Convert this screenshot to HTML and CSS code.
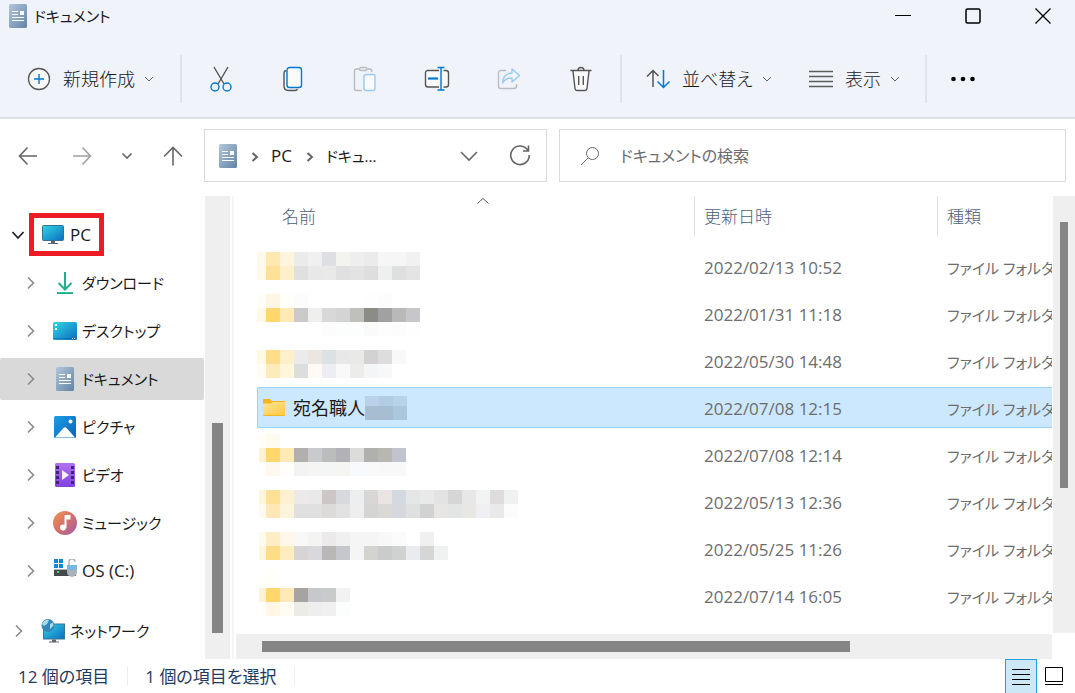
FILE: index.html
```html
<!DOCTYPE html>
<html lang="ja">
<head>
  <meta charset="UTF-8" />
  <meta name="viewport" content="width=device-width, initial-scale=1.0" />
  <title>ドキュメント</title>
  <link rel="stylesheet" href="styles.css">
</head>
<body>
  <!-- shared icons -->
  <svg class="defs" aria-hidden="true">
    <defs>
      <linearGradient id="g-doc" x1="0" y1="0" x2="1" y2="1"><stop offset="0" stop-color="#b3c6da"/><stop offset="1" stop-color="#6284a6"/></linearGradient>
      <linearGradient id="g-screen" x1="0" y1="0" x2="1" y2="1"><stop offset="0" stop-color="#33d6e4"/><stop offset="1" stop-color="#0b6cc0"/></linearGradient>
      <linearGradient id="g-pic" x1="0" y1="0" x2="1" y2="1"><stop offset="0" stop-color="#1c9de6"/><stop offset="1" stop-color="#0a63b8"/></linearGradient>
      <linearGradient id="g-video" x1="0" y1="0" x2="0" y2="1"><stop offset="0" stop-color="#b172f0"/><stop offset="1" stop-color="#8140e0"/></linearGradient>
      <linearGradient id="g-music" x1="0" y1="0" x2="1" y2="1"><stop offset="0" stop-color="#f4954f"/><stop offset=".5" stop-color="#d4706c"/><stop offset="1" stop-color="#a05cae"/></linearGradient>
      <linearGradient id="g-down" x1="0" y1="0" x2="0" y2="1"><stop offset="0" stop-color="#3cc98c"/><stop offset="1" stop-color="#0fa392"/></linearGradient>
      <linearGradient id="g-folder" x1="0" y1="0" x2="1" y2="1"><stop offset="0" stop-color="#ffe49a"/><stop offset="1" stop-color="#ffca3c"/></linearGradient>
    </defs>
    <symbol id="i-doc" viewBox="0 0 18 24">
      <rect width="18" height="24" rx="1.5" fill="url(#g-doc)"/>
      <path d="M3 7.500h6M3 10.500h6M3 13.500h12M3 16.500h12" stroke="#fff" stroke-width="1.2"/>
      <rect x="11" y="7" width="4" height="4" fill="#fff"/>
    </symbol>
    <symbol id="i-right" viewBox="0 0 10 14"><path d="M2 1.500L7.500 7L2 12.500" fill="none" stroke="currentColor" stroke-width="1.600"/></symbol>
    <symbol id="i-down" viewBox="0 0 12 8"><path d="M2 2l4 4l4-4" fill="none" stroke="currentColor"/></symbol>
  </svg>

  <header class="top">
    <div class="titlebar">
      <svg class="doc"><use href="#i-doc"/></svg>
      <h1>ドキュメント</h1>
      <div class="window-buttons">
        <button aria-label="最小化"><svg width="16" height="16"><path d="M0 7.500h16" stroke="#000"/></svg></button>
        <button aria-label="最大化"><svg width="16" height="16"><rect x="1" y="1" width="14" height="14" rx="1.500" fill="none" stroke="#000" stroke-width="1.500"/></svg></button>
        <button aria-label="閉じる"><svg width="16" height="16"><path d="M.5.5l15 15M15.500.5l-15 15" stroke="#000" stroke-width="1.300"/></svg></button>
      </div>
    </div>

    <div class="toolbar">
      <button class="command new">
        <svg width="24" height="24" fill="none"><circle cx="12" cy="12" r="10.500" fill="#fafafa" stroke="#555" stroke-width="1.300"/><path d="M12 7v10M7 12h10" stroke="#0078d4" stroke-width="1.400"/></svg>
        新規作成
        <svg class="caret"><use href="#i-down"/></svg>
      </button>
      <span class="divider"></span>
      <div class="tools">
        <button aria-label="切り取り"><svg width="24" height="26" fill="none" stroke-width="1.400"><path d="M5 1l10 17M19 1L9 18" stroke="#555"/><circle cx="6" cy="21" r="4" stroke="#0078d4"/><circle cx="18" cy="21" r="4" stroke="#0078d4"/></svg></button>
        <button aria-label="コピー"><svg width="24" height="26" fill="none" stroke-width="1.400"><path d="M5 4.500Q3 5 3 7V20Q3 24.500 7.500 24.500H14Q16 24.500 16.500 23" stroke="#555"/><rect x="6" y="1.500" width="14.500" height="20" rx="2.500" fill="#fafafa" stroke="#0078d4"/></svg></button>
        <button aria-label="貼り付け" disabled><svg width="24" height="26" fill="none" stroke-width="1.400"><path d="M6.500 3H3.500Q1.500 3 1.500 5V22.500Q1.500 24.500 3.500 24.500H9M14 3h3.500Q19 3.500 19 6" stroke="#b9bcc0"/><rect x="6.500" y="1.500" width="7.500" height="3" rx="1.500" stroke="#b9bcc0"/><rect x="11" y="8.500" width="11" height="16" rx="2" fill="#f8fafd" stroke="#9bcaf0"/></svg></button>
        <button aria-label="名前の変更"><svg width="26" height="26" fill="none"><path d="M15 4.500H4Q1.500 4.500 1.500 7V18.500Q1.500 21 4 21H15M19.500 4.500H22Q24.500 4.500 24.500 7V18.500Q24.500 21 22 21H19.500" fill="#fafafa" stroke="#555" stroke-width="1.400"/><path d="M4 12.500h10" stroke="#0078d4" stroke-width="2.200"/><path d="M17 1.500V24M13.500 1.500h7M13.500 24h7" stroke="#0078d4" stroke-width="1.400"/></svg></button>
        <button aria-label="共有" disabled><svg width="24" height="26" fill="none" stroke-width="1.400" stroke-linejoin="round"><path d="M9 4.500H4Q1.500 4.500 1.500 7V20Q1.500 22.500 4 22.500H17Q19.500 22.500 19.500 20V18" stroke="#b9bcc0"/><path d="M15 3l7.500 6.500L15 16V12Q9 11.500 5.500 17Q6 7.500 15 7Z" stroke="#9bcaf0"/></svg></button>
        <button aria-label="削除"><svg width="24" height="26" fill="none" stroke="#555" stroke-width="1.400"><path d="M4 5l2 17.500Q6.200 24.500 8 24.500H16Q17.800 24.500 18 22.500L20 5" fill="#fafafa"/><path d="M1.500 4.500h21M9 4.500Q9 1.500 12 1.500T15 4.500M9.700 10v9M14.300 10v9"/></svg></button>
      </div>
      <span class="divider"></span>
      <button class="command sort">
        <svg width="24" height="24" fill="none" stroke-width="1.500"><path d="M7 20V3.500M1 9.500l6-6l5.500 5.500" stroke="#555"/><path d="M17.500 3v17M11.500 14.500l6 6l6-6" stroke="#0078d4"/></svg>
        並べ替え
        <svg class="caret"><use href="#i-down"/></svg>
      </button>
      <button class="command view">
        <svg width="24" height="24" stroke="#5a5f5e" stroke-width="1.300"><path d="M0 4.500h24M0 9.500h24M0 14.500h24M0 19.500h24"/></svg>
        表示
        <svg class="caret"><use href="#i-down"/></svg>
      </button>
      <span class="divider"></span>
      <button class="more" aria-label="もっと見る"><svg width="26" height="8"><circle cx="3.500" cy="4" r="2.300"/><circle cx="13" cy="4" r="2.300"/><circle cx="22.500" cy="4" r="2.300"/></svg></button>
    </div>
  </header>

  <div class="location">
    <div class="history">
      <button aria-label="戻る"><svg width="20" height="20"><path d="M19 10H1.500M9.500 1.500L1.500 10l8 8.500"/></svg></button>
      <button class="off" aria-label="進む"><svg width="20" height="20"><path d="M1 10h17.500M10.500 1.500L18.500 10l-8 8.500"/></svg></button>
      <button class="recent" aria-label="最近表示した場所"><svg width="12" height="8"><path d="M1.500 1.500L6 6l4.500-4.500"/></svg></button>
      <button class="up" aria-label="上へ"><svg width="20" height="20"><path d="M10 19.500V1.500M1 10.500l9-9l9 9"/></svg></button>
    </div>
    <div class="address">
      <svg class="doc"><use href="#i-doc"/></svg>
      <svg class="crumb"><path d="M1.500 1L6 5L1.500 9"/></svg>
      <a href="#">PC</a>
      <svg class="crumb"><path d="M1.500 1L6 5L1.500 9"/></svg>
      <a href="#" class="here">ドキュ...</a>
      <button class="history-open" aria-label="以前の場所"><svg width="20" height="12"><path d="M2 2l8 8l8-8"/></svg></button>
      <button aria-label="最新の情報に更新"><svg width="22" height="22"><path d="M19 5.500A9.300 9.300 0 1 0 20.300 10M19.500.5V6H14"/></svg></button>
    </div>
    <label class="search">
      <svg width="20" height="20"><circle cx="12.500" cy="7.500" r="6"/><path d="M8.200 12L1 19"/></svg>
      <input type="search" placeholder="ドキュメントの検索" aria-label="ドキュメントの検索">
    </label>
  </div>

  <main class="content">
    <nav class="tree">
      <ul>
        <li class="root"><svg class="open" viewBox="0 0 14 10"><path d="M1.500 2L7 8l5.500-6"/></svg>
          <a href="#" class="marked"><svg class="icon-pc" viewBox="0 0 22 20"><rect x=".5" y=".5" width="21" height="15" rx="1" fill="url(#g-screen)" stroke="#36718f"/><path d="M9 16h4v2h3v1H6v-1h3z" fill="#5c6670"/></svg>PC</a></li>
        <li><svg class="closed"><use href="#i-right"/></svg>
          <a href="#"><svg class="icon"><path d="M12 1v17M5.500 12l6.500 6.500l6.500-6.500" fill="none" stroke="#1fae90" stroke-width="2"/><rect x="4" y="21" width="16" height="2" fill="url(#g-down)"/></svg>ダウンロード</a></li>
        <li><svg class="closed"><use href="#i-right"/></svg>
          <a href="#"><svg class="icon"><rect y="3" width="24" height="18" rx="1.500" fill="url(#g-screen)"/><path d="M2 5h2v2H2zM2 9h2v2H2z" fill="#fff"/><path d="M0 19.500h24" stroke="#0a5ca8" stroke-opacity=".5"/><path d="M19 19.500h1M21 19.500h1" stroke="#fff"/></svg>デスクトップ</a></li>
        <li class="current"><svg class="closed"><use href="#i-right"/></svg>
          <a href="#"><svg class="icon"><use href="#i-doc" x="3" width="18" height="24"/></svg>ドキュメント</a></li>
        <li><svg class="closed"><use href="#i-right"/></svg>
          <a href="#"><svg class="icon"><rect x="1" y="1" width="22" height="22" rx="1.500" fill="url(#g-pic)"/><path d="M2 22.500L10.500 13Q12 11.500 13.500 13L22 22.500z" fill="#fff"/><circle cx="17.500" cy="6.500" r="2" fill="#fff"/></svg>ピクチャ</a></li>
        <li><svg class="closed"><use href="#i-right"/></svg>
          <a href="#"><svg class="icon"><rect x="2" width="20" height="24" rx="1.500" fill="url(#g-video)"/><path d="M4.500 3v19M19.500 3v19" stroke="#3f2478" stroke-width="3" stroke-dasharray="3 2"/><path d="M9 7l7 5l-7 5z" fill="#f6f2fc"/></svg>ビデオ</a></li>
        <li><svg class="closed"><use href="#i-right"/></svg>
          <a href="#"><svg class="icon"><circle cx="12" cy="12" r="12" fill="url(#g-music)"/><circle cx="10" cy="16.500" r="3" fill="#fff"/><path d="M11.500 17V4h6v4.500h-4V17z" fill="#fff"/></svg>ミュージック</a></li>
        <li class="drive"><svg class="closed"><use href="#i-right"/></svg>
          <a href="#"><svg class="icon"><path d="M1 0h4v4H1zM6 0h4v4H6zM1 5h4v4H1zM6 5h4v4H6z" fill="#1487dc"/><path d="M1 11h22v6H1z" fill="#44494e"/><path d="M1 10h22v1H1z" fill="#aeb4b9"/><path d="M4 12h2v2H4z" fill="#35e04c"/><path d="M16 6V3Q16 0 19 0t3 3" fill="none" stroke="#b0b8bf" stroke-width="1.600"/><path d="M14 6h10v7q0 4-5 5q-5-1-5-5z" fill="#a8b3bb"/><path d="M14 6h10v5H14z" fill="#77b7df"/></svg>OS (C:)</a></li>
        <li class="root network"><svg class="closed"><use href="#i-right"/></svg>
          <a href="#"><svg class="icon"><rect x="2.500" y="5" width="21" height="15" fill="url(#g-screen)" stroke="#3c7590"/><path d="M11 20.500h4v2h3v1H8v-1h3z" fill="#5c6670"/><circle cx="7" cy="6.500" r="6.500" fill="#3488b8"/><path d="M1 5Q4 0 8 1L6 5L3 7zM9 5l3-1.500l.5 3L9 10z" fill="#a8dced"/></svg>ネットワーク</a></li>
      </ul>
    </nav>
    <div class="scroll-y tree-scroll"><div class="thumb"></div></div>

    <section class="files">
      <table>
        <thead>
          <tr>
            <th class="name"><div><button>名前<svg class="sorted" viewBox="0 0 12 6"><path d="M.5 5.500L6 .5l5.500 5"/></svg></button></div></th>
            <th class="date"><div><button>更新日時</button></div></th>
            <th class="type"><div><button>種類</button></div></th>
          </tr>
        </thead>
        <tbody>
          <tr><td><div><svg class="masked"></svg></div></td><td><div>2022/02/13 10:52</div></td><td><div>ファイル フォルダー</div></td></tr>
          <tr><td><div><svg class="masked"></svg></div></td><td><div>2022/01/31 11:18</div></td><td><div>ファイル フォルダー</div></td></tr>
          <tr><td><div><svg class="masked"></svg></div></td><td><div>2022/05/30 14:48</div></td><td><div>ファイル フォルダー</div></td></tr>
          <tr class="selected"><td><div><svg class="folder" viewBox="0 0 22 17"><path d="M0 1Q0 0 1 0h6l2 2h12q1 0 1 1v13q0 1-1 1H1q-1 0-1-1z" fill="#f5b51e"/><path d="M0 4.500h8l2-1.500h12v13H0z" fill="url(#g-folder)"/></svg>宛名職人<svg width="42" height="24" shape-rendering="crispEdges"><path d="M0 0h14v10H0z" fill="#b9d2e9"/><path d="M14 0h14v10H14z" fill="#b2cce1"/><path d="M28 0h14v10H28z" fill="#b7d3ea"/><path d="M0 10h28v14H0z" fill="#a6bdd2"/><path d="M28 10h14v14H28z" fill="#abc7de"/></svg></div></td><td><div>2022/07/08 12:15</div></td><td><div>ファイル フォルダー</div></td></tr>
          <tr><td><div><svg class="masked"></svg></div></td><td><div>2022/07/08 12:14</div></td><td><div>ファイル フォルダー</div></td></tr>
          <tr><td><div><svg class="masked"></svg></div></td><td><div>2022/05/13 12:36</div></td><td><div>ファイル フォルダー</div></td></tr>
          <tr><td><div><svg class="masked"></svg></div></td><td><div>2022/05/25 11:26</div></td><td><div>ファイル フォルダー</div></td></tr>
          <tr><td><div><svg class="masked"></svg></div></td><td><div>2022/07/14 16:05</div></td><td><div>ファイル フォルダー</div></td></tr>
        </tbody>
      </table>
      <div class="scroll-x"><div class="thumb"></div></div>
    </section>
    <div class="scroll-y files-scroll"><div class="thumb"></div></div>
  </main>

  <footer class="status">
    <span>12 個の項目</span>
    <span>1 個の項目を選択</span>
    <div class="view-modes">
      <button class="active" aria-label="詳細"><svg width="18" height="18"><path d="M0 1.500h18M0 6.500h18M0 11.500h18M0 16.500h18"/></svg></button>
      <button aria-label="大アイコン"><svg width="18" height="20"><path d="M.5 1.500h17v14H.5zM0 18.500h18"/></svg></button>
    </div>
  </footer>

  <script src="script.js"></script>
</body>
</html>
```
FILE: styles.css
```css
* {
  box-sizing: border-box;
}
body {
  margin: 0;
  height: 100vh;
  display: flex;
  flex-direction: column;
  overflow: hidden;
  background: #fff;
  color: #1a1a1a;
  font-family: "Open Sans", "Noto Sans CJK JP", sans-serif;
  font-size: 17px;
  line-height: 24px;
  font-feature-settings: "palt";
}
button, input {
  font: inherit;
  font-feature-settings: inherit;
  color: inherit;
  background: none;
  border: 0;
  padding: 0;
}
button {
  display: flex;
  align-items: center;
  justify-content: center;
  white-space: nowrap;
}
a {
  color: inherit;
  text-decoration: none;
}
svg {
  flex: none;
  display: block;
}
.defs {
  position: absolute;
  width: 0;
  height: 0;
}
.doc {
  width: 18px;
  height: 24px;
}

/* title and commands */
.top {
  background: #f0f3fa;
  border-bottom: 2px solid #dde1e6;
}
.titlebar {
  display: flex;
  align-items: center;
  height: 32px;
  padding-left: 9px;
}
.titlebar h1 {
  flex: 1;
  margin: 0 0 0 7px;
  font-size: 15px;
  font-weight: 400;
}
.window-buttons {
  display: flex;
  gap: 6px;
}
.window-buttons button {
  width: 64px;
  height: 32px;
}
.toolbar {
  display: flex;
  align-items: center;
  height: 85px;
  padding: 8px 0 0 27px;
}
.toolbar .divider {
  width: 2px;
  height: 48px;
  background: #e0e3e8;
}
.command {
  gap: 12px;
  justify-content: flex-start;
  font-size: 18px;
  font-weight: 300;
}
.command.new {
  width: 129px;
  margin-right: 24px;
}
.command.sort {
  width: 121px;
  margin-left: 24px;
}
.command.view {
  width: 92px;
  margin: 0 24px 0 42px;
}
.command .caret {
  width: 12px;
  height: 8px;
  margin-left: auto;
  color: #666;
}
.command.new, .command.sort, .command.view {
  column-gap: 12px;
}
.command .caret {
  margin-left: -4px;
}
.tools {
  display: flex;
  margin: 0 3px;
}
.tools button {
  width: 72px;
  height: 48px;
}
.more {
  margin-left: 23px;
}

/* address row */
.location {
  display: flex;
  padding: 10px 9px 14px 0;
}
.location svg {
  fill: none;
  stroke: #666;
  stroke-width: 1.6;
}
.location .doc {
  stroke: none;
}
.history {
  display: flex;
  width: 204px;
  padding-left: 1px;
}
.history button {
  width: 54px;
}
.history .off svg {
  stroke: #a0a0a0;
}
.history .recent {
  width: 35px;
}
.history .up {
  width: 58px;
}
.address, .search {
  display: flex;
  align-items: center;
  height: 53px;
  border: 1px solid #d9d9d9;
}
.address {
  width: 343px;
  margin-right: 12px;
  padding: 0 15px 0 14px;
}
.address .crumb {
  width: 8px;
  height: 10px;
  margin: 2px 12px 0 14px;
  stroke-width: 2;
}
.address .here {
  font-size: 15px;
}
.address .history-open {
  margin: 0 30px 0 auto;
}
.search {
  flex: 1;
  padding-left: 20px;
}
.search svg {
  stroke-width: 1;
}
.search input {
  flex: 1;
  min-width: 0;
  margin-left: 20px;
  outline: none;
  font-size: 16px;
}
.search input::placeholder {
  color: #6d6d6d;
  opacity: 1;
}

/* folder tree */
.content {
  flex: 1;
  min-height: 0;
  display: flex;
}
.tree {
  width: 205px;
  padding: 15px 1px 0 0;
  overflow: hidden;
}
.tree ul {
  margin: 0;
  padding: 0;
  list-style: none;
}
.tree li {
  display: flex;
  align-items: center;
  height: 42px;
  margin: 3px 0 6px;
  padding-left: 26px;
  border-radius: 2px;
  font-size: 15px;
}
.tree li.root {
  padding-left: 11px;
}
.tree li.drive {
  font-size: 17px;
}
.tree li.network {
  margin-top: 18px;
  padding-left: 14px;
}
.tree li.current {
  background: #d9d9d9;
}
.tree a {
  display: flex;
  align-items: center;
  gap: 5px;
  margin-left: 17px;
}
.tree .closed {
  width: 10px;
  height: 14px;
  color: #8a8a8a;
}
.tree .open {
  width: 14px;
  height: 10px;
  fill: none;
  stroke: #222;
  stroke-width: 1.8;
}
.tree .icon {
  width: 24px;
  height: 24px;
}
.tree .icon-pc {
  width: 22px;
  height: 20px;
}
.tree a.marked {
  margin: 0 0 1px 4px;
  height: 43px;
  padding: 0 8px;
  border: 5px solid #ed1c24;
  gap: 6px;
  font-size: 17px;
}

/* scrollbars */
.scroll-y, .scroll-x {
  display: flex;
  background: #efefef;
}
.scroll-y {
  width: 25px;
  padding: 26px 7px;
}
.scroll-x {
  height: 25px;
  margin-left: -21px;
  padding: 7px 26px;
}
.thumb {
  background: #858585;
}
.scroll-x .thumb {
  width: 77%;
}
.scroll-y .thumb {
  width: 11px;
}
.tree-scroll .thumb {
  height: 51%;
  align-self: flex-end;
}
.files-scroll {
  width: 22px;
  margin: 0 0 26px 1px;
}
.files-scroll .thumb {
  height: 69%;
}

/* file list */
.files {
  flex: 1;
  min-width: 0;
  display: flex;
  flex-direction: column;
  justify-content: space-between;
  margin-left: 2px;
  padding-left: 23px;
  border-left: 2px solid #f5f5f5;
}
table {
  width: 100%;
  table-layout: fixed;
  border-spacing: 0;
}
th, td {
  height: 47px;
  padding: 0;
  overflow: hidden;
  white-space: nowrap;
  font-weight: 400;
  text-align: left;
}
th {
  vertical-align: top;
  color: #4c607a;
}
th.date {
  width: 243px;
}
th.type {
  width: 115px;
}
th div, td div {
  display: flex;
  align-items: center;
  height: 41px;
}
th.date div, th.type div {
  border-left: 1px solid #e2e2e2;
  padding-left: 9px;
}
th button {
  height: 41px;
  font-weight: 300;
}
th.name button {
  position: relative;
  flex: 1;
  margin-left: 15px;
  padding-left: 10px;
  justify-content: flex-start;
}
.sorted {
  position: absolute;
  top: 2px;
  left: 50%;
  width: 12px;
  height: 6px;
  margin-left: -6px;
  fill: none;
  stroke: #555;
}
td div {
  padding: 2px 0 0 10px;
  color: #6d6d6d;
}
td:first-child div {
  padding: 0;
  color: #1a1a1a;
}
td:last-child div {
  font-size: 15px;
}
.selected div {
  background: #cce8ff;
  border: solid #99d1ff;
  border-width: 1px 0;
}
.selected td:first-child div {
  padding-left: 5px;
  border-left-width: 1px;
  border-radius: 2px 0 0 2px;
  font-size: 18px;
}
.folder {
  width: 22px;
  height: 17px;
  margin-right: 8px;
}
.masked {
  width: 100%;
  height: 41px;
  overflow: visible;
  shape-rendering: crispEdges;
}

/* status bar */
.status {
  display: flex;
  align-items: center;
  height: 34px;
  padding: 0 5px 0 1px;
  color: #1f3a5f;
}
.status span {
  padding: 2px 18px 0 17px;
  line-height: 18px;
  border-right: 1px solid #eee;
}
.view-modes {
  display: flex;
  align-self: stretch;
  margin-left: auto;
}
.view-modes button {
  width: 33px;
}
.view-modes .active {
  width: 32px;
  border: 1px solid #26a0da;
  border-bottom: 0;
  background: #cce8f6;
}
.view-modes svg {
  fill: none;
  stroke: #000;
}
```
FILE: script.js
```javascript
// Hidden file names: x and y of the first block, then one line of colours per 14px row.
// "-" leaves the block empty.
const masks = [
  { x: 0, y: 6, rows: [
    "fff9ec ffe9b0 fff5df ebebeb f0f0f0 dddfe2 f3f3f0 eeeeee e9ecea f6f6f6 f6f6f6 f1f1f1",
    "fff9ec ffe196 fff0cc e0e0e0 e8e8e8 e9e9e9 e0e0e0 e3e3e3 dededc eef0ef dde0df e4e4e4"] },
  { x: 0, y: 1, rows: [
    "fffdf7 fff5e3 fffef9 fcfcfd - - - - fefefe fcfcfc",
    "fff9e6 ffd76c ffe9b5 cacaca efefed d8d8d8 d4d4d4 bfbfbc 8c8c86 a1a1a3 b9b9b9 c6c6cb",
    "- - - - - fcfcfc fcfefd fcfefd fafaf8 fcfefd fcfcfc fefefe"] },
  { x: 0, y: 10, rows: [
    "fff9e6 ffde87 fff0cc eaebea ebe6e2 dce1e4 e8e8e8 e9e9e7 d3d1d2 dddddf f8f8f8",
    "fffdf3 fdebbb fff6dc dcdedd fffaf6 eceef3 f9f9f9 ecedea f3f5f7 f6f8fa"] },
  { x: 2, y: 0, rows: [
    "fffdf7 fffbee",
    "fff1d4 ffd76c ffe9b5 b1b0af c9cacd babdbb b2b1b7 dcdcda b0b0ae b8b7b2 c1c4cf",
    "fffefc fff8f1 fffefa f3f3f3 f5f5f3 f4f6f5 f5f5f2 f8f9fd f8f9fa f8f8f8 f7f9f8"] },
  { x: 2, y: 9, rows: [
    "fff5da ffe196 fff1d0 ece9ea e9e9e9 ccc7c6 d8d9dc eceef0 d8d7d5 eae5e2 d4d8e0 e4e7e6 e9e9e9 e3e3e3 d6d6d6 e7e7e7 f1f4f3 dfdcdc eff2f1",
    "fffaef ffe8b6 fdf4dc e0e0e0 e0e0e0 dcdbd9 e2e2e2 eeeeee d5d5d4 dad9d6 d5d8de dfe1e0 d2d2d2 e7e6e4 e2e5e4 e8e7e4 eef0f3 e9e9e9 fcfcfc"] },
  { x: 2, y: 4, rows: [
    "fffaec feedc5 fff8e9 f8f8f8 f4f4f2 ebe9ea f0f0f0 f5f5f5 f5f5f5 f8f8f8 fafcfb - f0f0f0",
    "fff6df ffdd84 ffecbf d6d4d5 d9d8dc b9b8b6 c6c6cd f5f5f5 d4d4cf cacbcc d0d1d1 eaebee d6d6d6 f0f2f1"] },
  { x: 2, y: -1, rows: [
    "fffffb fffef8",
    "fff1d4 ffd76c ffe9b8 a5a4a2 c7c8cb c8cbc9 f2f2f2",
    "fffefa fff6e6 fffcf3 ebebe8 eeeeee f0f0f0 fcfefd"] }
];

document.querySelectorAll(".masked").forEach((svg, i) => {
  const mask = masks[i];
  mask.rows.forEach((row, r) => {
    row.split(" ").forEach((color, c) => {
      if (color === "-") return;
      const block = document.createElementNS("http://www.w3.org/2000/svg", "rect");
      // the first block is cut off at the left edge
      block.setAttribute("x", c === 0 ? mask.x : c * 14 - 5);
      block.setAttribute("y", mask.y + r * 14);
      block.setAttribute("width", c === 0 ? 9 - mask.x : 14);
      block.setAttribute("height", 14);
      block.setAttribute("fill", "#" + color);
      svg.appendChild(block);
    });
  });
});
```
